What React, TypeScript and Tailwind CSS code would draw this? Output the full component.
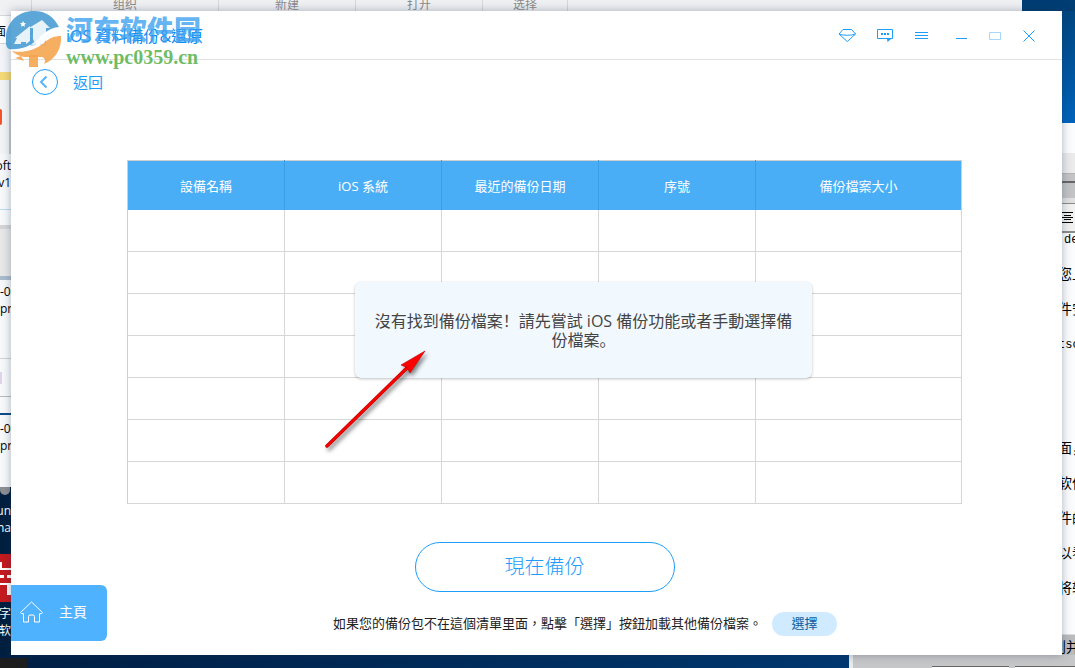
import type { ReactNode } from "react";

const columns = ["設備名稱", "iOS 系統", "最近的備份日期", "序號", "備份檔案大小"];
const rows = [1, 2, 3, 4, 5, 6, 7];

interface IconButtonProps {
  label: string;
  className: string;
  children: ReactNode;
}

function IconButton({ label, className, children }: IconButtonProps) {
  return (
    <button type="button" aria-label={label} className={className}>
      {children}
    </button>
  );
}

function HomeIcon({ className }: { className: string }) {
  return (
    <svg viewBox="0 0 24 22" className={className} fill="none" stroke="currentColor">
      <path d="M1 11.5 12 1l11 10.5-1 1.2h-2V21h-5v-5.500a1.500 1.500 0 0 0-1.500-1.500h-3A1.500 1.500 0 0 0 9 15.500V21H4v-8.300H2z" />
    </svg>
  );
}

// logo + site name stamped over the title bar
function Watermark() {
  return (
    <div className="absolute left-[6px] top-[11px] z-30 flex items-start gap-1 pointer-events-none">
      <svg viewBox="0 0 56 56" className="h-14 w-14">
        <path
          d="M0 32C-2 14 10 0 28 0c12 0 20 6 25 16-10 1-15 6-21 12C24 36 14 39 3 38 1 37 0 35 0 32z"
          fill="#3f98d0"
          opacity=".85"
        />
        <path
          d="M55 25c1 14-7 24-17 28 2-3 1-6-2-7H18c-5-1-9-3-12-6 13 2 24-1 33-9 5-4 9-6 16-6z"
          fill="#f5a34a"
          opacity=".88"
        />
        <path d="M2 39c12 2 23-1 31-9 7-7 12-12 20-13l2 6c-8 1-12 4-17 8-9 8-21 11-31 9-2 0-4 0-5-1z" fill="#fff" opacity=".85" />
        <path d="M23 44h9v12h-9zM9 47l6-2 3 5z" fill="#f5a34a" opacity=".88" />
        <path
          d="M8 33 11 27h-2L24 15v15l-4 3v-2h-5v2zM27 28V17h-4L36 9l8 8h-4v7l-5 5-6 4z"
          fill="#fff"
          opacity=".85"
        />
        <path d="m17 10 1 2 2 .3-1.500 1.400.4 2.100-1.900-1-1.900 1 .4-2.100L14 12.300l2-.3z" fill="#fff" />
      </svg>
      <div className="flex flex-col pt-1">
        <span className="font-['Noto_Sans_CJK_SC',sans-serif] text-[27px] leading-7 font-black text-[#3c9fee]/80">
          河东软件园
        </span>
        <span className="font-['Liberation_Serif',serif] text-[20px] leading-7 font-bold text-[#5bb450]/90">
          www.pc0359.cn
        </span>
      </div>
    </div>
  );
}

function TitleBar() {
  return (
    <header className="flex h-[49px] items-center justify-between border-b border-[#dfe1e3] pl-4 pr-[27px] pt-0.5 text-[#1e9dfb]">
      <h1 className="flex items-center gap-[17px] text-base text-[#0a8cf5]">
        <HomeIcon className="h-5 w-[22px] opacity-60" />
        iOS 資料備份&amp;還原
      </h1>
      <div className="flex items-center gap-[22px]">
        <IconButton label="升級" className="h-4 w-4">
          <svg viewBox="0 0 16 16" fill="none" stroke="currentColor" strokeLinejoin="round" className="overflow-visible">
            <path d="M4 1.500h8.500L16.500 6 8.300 13.500 0 6zM0 6c4 1.700 12.500 1.700 16.500 0" />
          </svg>
        </IconButton>
        <IconButton label="意見" className="h-4 w-4">
          <svg viewBox="0 0 16 16" fill="none" stroke="currentColor">
            <path d="M.500 1.500h15v9H.500z" />
            <path d="M4 5h2v2H4zM7 5h2v2H7zM10 5h2v2h-2zM10 11h4l-3.500 3z" fill="currentColor" stroke="none" />
          </svg>
        </IconButton>
        <IconButton label="選單" className="h-4 w-[13px]">
          <svg viewBox="0 0 13 16" stroke="currentColor">
            <path d="M0 4.500h13M0 7.500h13M0 10.500h13" />
          </svg>
        </IconButton>
        <IconButton label="最小化" className="ml-1.5 h-4 w-[11px]">
          <svg viewBox="0 0 11 16" stroke="currentColor">
            <path d="M0 10.500h11" />
          </svg>
        </IconButton>
        <IconButton label="最大化" className="h-4 w-3 text-[#a5d7fd]">
          <svg viewBox="0 0 12 16" fill="none" stroke="currentColor">
            <path d="M.500 4.500h11v7H.500z" />
          </svg>
        </IconButton>
        <IconButton label="關閉" className="h-4 w-3">
          <svg viewBox="0 0 12 16" stroke="currentColor">
            <path d="m.500 2.500 11 11m0-11-11 11" />
          </svg>
        </IconButton>
      </div>
    </header>
  );
}

function BackupTable() {
  return (
    <div className="relative">
      <table className="w-full table-fixed border-collapse border border-[#cfcfcf]">
        <thead>
          <tr className="h-[49px] bg-[#4aaef6] text-[13px] text-white">
            {columns.map((column) => (
              <th
                key={column}
                className="w-[157px] border-r border-[#3a9fe3] pt-0.5 font-normal last:w-auto last:border-[#cfcfcf]"
              >
                {column}
              </th>
            ))}
          </tr>
        </thead>
        <tbody>
          {rows.map((row) => (
            <tr key={row} className="h-[42px]">
              {columns.map((column) => (
                <td key={column} className="border-r border-b border-[#d6d6d6]" />
              ))}
            </tr>
          ))}
        </tbody>
      </table>
      <div
        role="alert"
        className="absolute left-[228px] right-[150px] top-[122px] flex h-24 items-center justify-center rounded-md bg-[#f1f8fe] px-4 pt-px text-center font-['Open_Sans','Noto_Sans_CJK_SC',sans-serif] text-base leading-[19px] text-[#444] shadow-[0_1px_3px_rgba(0,0,0,0.25)]"
      >
        沒有找到備份檔案！請先嘗試 iOS 備份功能或者手動選擇備份檔案。
      </div>
      <svg
        viewBox="0 0 110 110"
        className="absolute left-[193px] top-[184px] h-[110px] w-[110px] drop-shadow-[2px_3px_2px_rgba(0,0,0,0.5)]"
      >
        <path d="M7 102 88 23" stroke="#b00" strokeWidth="3.500" strokeLinecap="round" />
        <path d="M7 102 88 23" stroke="#f00" strokeWidth="2.200" strokeLinecap="round" />
        <path d="M105 7 81 21l6 2.500L90 29z" fill="#f00" stroke="#b00" strokeWidth=".6" />
      </svg>
    </div>
  );
}

// what can be seen of the desktop to the left of the window
function DesktopLeft() {
  return (
    <div className="flex w-[11px] shrink-0 flex-col overflow-hidden bg-[#001f3f] font-['Open_Sans','Noto_Sans_CJK_SC',sans-serif] text-xs leading-[17px] whitespace-nowrap text-black">
      <div className="h-[4px] bg-[#f1f3f5]" />
      <div className="flex h-[29px] items-center justify-end border-y border-[#d5d7d9] bg-white pr-[5px] pt-1">面</div>
      <div className="h-[28px] bg-[#f3f5f8]" />
      <div className="h-[8px] bg-[#f6d977]" />
      <div className="flex h-[74px] flex-col justify-center border-r-2 border-[#c9cbce] bg-[#f3f4f5]">
        <div className="h-[16px] w-[2px] rounded-r-full bg-[#f4512c]" />
      </div>
      <div className="flex h-[56px] flex-col items-end border-b border-[#bcdcf3] bg-[#f7f9fb] pt-[3px]">
        <span>oft</span>
        <span>v1</span>
      </div>
      <div className="h-[15px] bg-[#f7f9fb]" />
      <div className="h-[55px] border-t-4 border-b-4 border-t-[#d5d5d5] border-b-[#a9bccb] bg-[#e8e8e8]" />
      <div className="flex h-[79px] flex-col items-start border-b border-[#d2d4d6] bg-[#f7f9fb] pt-[3px]">
        <span>-0.</span>
        <span>pn</span>
      </div>
      <div className="flex h-[38px] items-center border-b border-[#b9bbbe] bg-[#f7f9fb]">
        <div className="h-3 w-[2px] bg-[#e1d3e9]" />
      </div>
      <div className="h-[18px] border-b-2 border-[#0c4b86] bg-[#f7f9fb]" />
      <div className="flex h-[72px] flex-col items-start bg-[#f7f9fb] pt-[5px]">
        <span>-0.</span>
        <span>pn</span>
      </div>
      <div className="h-[8px] w-[10px] rounded-b-full bg-[#8d9093]" />
      <div className="flex h-[59px] flex-col items-end pt-[7px] text-white">
        <span>un</span>
        <span>na</span>
      </div>
      <div className="flex h-[48px] flex-col justify-center gap-[5px] bg-[#c51a20]">
        <div className="h-2 border-b-2 border-l-2 border-white" />
        <div className="h-[3px] border-x-4 border-white" />
        <div className="h-3 border-t-2 border-r-4 border-white" />
      </div>
      <div className="flex flex-1 flex-col items-end pt-[3px] text-white">
        <span>文字</span>
        <span>换软</span>
      </div>
    </div>
  );
}

// same on the right: wallpaper, then a document editor
function DesktopRight() {
  return (
    <div className="flex w-[13px] shrink-0 flex-col overflow-hidden bg-[#fbfcfd] font-['Liberation_Mono','Noto_Sans_CJK_SC',monospace] text-sm leading-[35px] whitespace-nowrap text-black">
      <div className="h-[112px] bg-linear-to-b from-[#004680] to-[#0063bb]" />
      <div className="h-[30px]" />
      <div className="h-[21px] border-b border-[#b5b5b5] bg-[#ebebec]" />
      <div className="h-[9px] border-b-2 border-[#666] bg-[#c4c4c6]" />
      <div className="h-[15px] bg-[#c2c3c5]" />
      <div className="h-[6px] border-b border-[#8b8b8b] bg-[#e0e0e0]" />
      <div className="flex h-[29px] items-center border-b-2 border-[#8b8b8b] bg-[#f1f1f1]">
        <svg viewBox="0 0 11 11" className="h-[11px] w-[11px]" stroke="#000">
          <path d="M0 .500h11M2 3.500h7M0 5.500h11M2 7.500h7M0 10.500h11" />
        </svg>
      </div>
      <div className="h-[175px]">
        <p className="-mt-[10px] pl-[2px] text-xs leading-[35px]">de</p>
        <p className="-indent-1">您上</p>
        <p className="-indent-1">件安</p>
        <p className="-indent-1 text-xs leading-[35px]">tsc</p>
      </div>
      <div className="flex-1">
        <p className="mt-[24px] -indent-1">面，</p>
        <p className="-indent-1">软件</p>
        <p className="-indent-1">件的</p>
        <p className="-indent-1">以看</p>
        <p className="-indent-1">将转</p>
      </div>
      <div className="h-[21px] border-t border-[#ddd] bg-[#bbbcbe] leading-[26px] -indent-2.5">到并</div>
    </div>
  );
}

function App() {
  return (
    <div className="relative flex min-h-screen flex-col overflow-hidden font-['Open_Sans','Noto_Sans_CJK_TC',sans-serif]">
      <div className="flex h-[11px] overflow-hidden bg-[#003d73] font-['Noto_Sans_CJK_SC',sans-serif] text-xs leading-[8px] text-[#8b8b8b]">
        <div className="w-[31px] bg-[#f0f1f3]" />
        <div className="w-[188px] border-x border-[#d6d8da] bg-[#f0f1f3] text-center">组织</div>
        <div className="w-[137px] border-r border-[#d6d8da] bg-[#f0f1f3] text-center">新建</div>
        <div className="w-[127px] border-r border-[#d6d8da] bg-[#f0f1f3] text-center">打开</div>
        <div className="w-[85px] border-r border-[#d6d8da] bg-[#f0f1f3] text-center">选择</div>
        <div className="mr-[53px] flex-1 bg-[#f0f1f3]" />
      </div>

      <div className="flex flex-1">
        <DesktopLeft />
        <div className="z-10 flex flex-1 flex-col bg-white shadow-[0_0_9px_rgba(30,50,80,0.35)]">
          <TitleBar />
          <div className="flex flex-1">
            <aside className="flex w-24 flex-col justify-between pb-[14px] pt-[9px]">
              <button type="button" className="flex items-center gap-[15px] pl-[21px] text-[15px] leading-[26px] text-[#1e9dfb]">
                <svg viewBox="0 0 26 26" className="h-[26px] w-[26px] shrink-0" fill="none" stroke="currentColor">
                  <circle cx="13" cy="13" r="12.500" />
                  <path d="m14.500 7.500-5.500 5.500 5.500 5.500" strokeWidth="2" opacity=".75" />
                </svg>
                返回
              </button>
              <a href="#home" className="flex h-14 items-center gap-[15px] rounded-r-md bg-[#4fb2fe] pb-0.5 pl-2 text-sm text-white">
                <HomeIcon className="h-[22px] w-[25px]" />
                主頁
              </a>
            </aside>

            <main className="flex flex-1 flex-col pl-5 pr-[100px] pt-[100px]">
              <BackupTable />
              <button
                type="button"
                className="mt-[38px] h-[50px] w-[260px] self-center rounded-full border border-[#1e9dfb] text-xl font-light text-[#1e9dfb]"
              >
                現在備份
              </button>
              <div className="mt-5 flex items-center gap-[10px] pl-[206px] text-[13px] whitespace-nowrap text-[#222]">
                <p>如果您的備份包不在這個清單里面，點擊「選擇」按鈕加載其他備份檔案。</p>
                <button type="button" className="h-6 w-[65px] rounded-full bg-[#d0ebff] text-[#0b5c9e]">
                  選擇
                </button>
              </div>
            </main>
          </div>
        </div>
        <DesktopRight />
      </div>

      <div className="flex h-[13px] items-end bg-linear-to-r from-[#001f44] to-[#003f7c]">
        <div className="h-[10px] w-[27px] bg-[#1d1d1d]" />
        <div className="flex-1" />
        <div className="flex h-full w-[226px] items-end gap-1.5 border-l-4 border-[#e8eaec] bg-[#c6c7c8] pl-[79px]">
          <div className="h-[2px] w-[77px] border-t border-[#666] bg-white" />
          <div className="h-[2px] flex-1 border-t border-[#666] bg-white" />
        </div>
      </div>

      <Watermark />
    </div>
  );
}

export default App;
